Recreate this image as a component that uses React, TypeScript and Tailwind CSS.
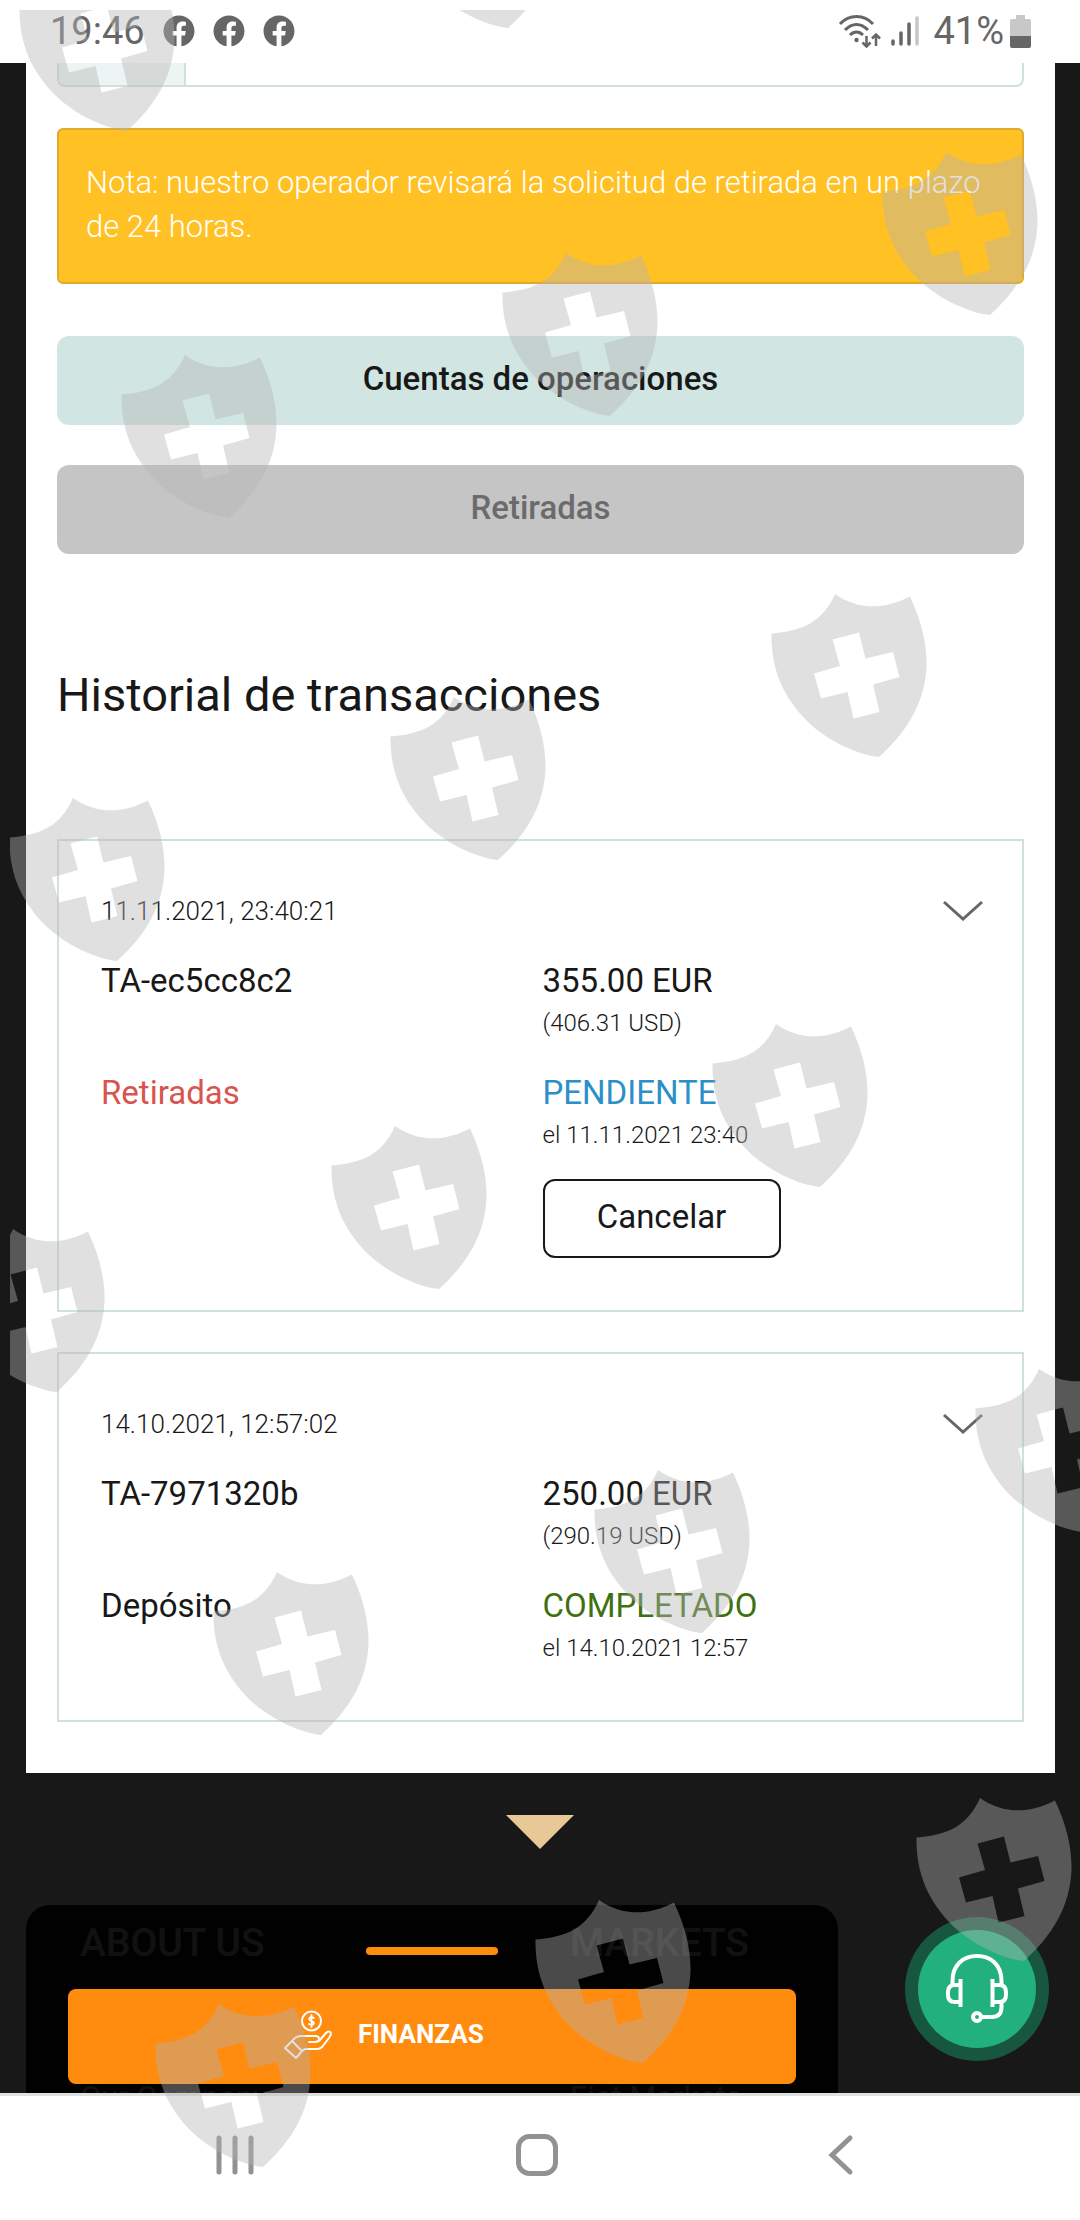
import { FaFacebook } from "react-icons/fa";

type Transaction = {
  id: string;
  date: string;
  type: string;
  typeColor: string;
  amount: string;
  converted: string;
  status: string;
  statusColor: string;
  statusDate: string;
  cancelable?: boolean;
};

const transactions: Transaction[] = [
  {
    id: "TA-ec5cc8c2",
    date: "11.11.2021, 23:40:21",
    type: "Retiradas",
    typeColor: "text-[#d9534f]",
    amount: "355.00 EUR",
    converted: "(406.31 USD)",
    status: "PENDIENTE",
    statusColor: "text-[#2b90c8]",
    statusDate: "el 11.11.2021 23:40",
    cancelable: true,
  },
  {
    id: "TA-7971320b",
    date: "14.10.2021, 12:57:02",
    type: "Depósito",
    typeColor: "text-[#181818]",
    amount: "250.00 EUR",
    converted: "(290.19 USD)",
    status: "COMPLETADO",
    statusColor: "text-[#3f7011]",
    statusDate: "el 14.10.2021 12:57",
  },
];

const shields = [
  [399, -139],
  [18, -36],
  [881, 148],
  [501, 249],
  [120, 351],
  [770, 590],
  [389, 693],
  [8, 794],
  [711, 1020],
  [330, 1122],
  [-52, 1225],
  [974, 1365],
  [593, 1466],
  [212, 1568],
  [915, 1794],
  [534, 1896],
  [154, 2000],
];

const Watermark = () => (
  <svg
    className="pointer-events-none absolute top-2.5 left-2.5 h-full w-full"
    aria-hidden="true"
  >
    <defs>
      <path
        id="shield"
        fillRule="evenodd"
        d="M1.5 43.5C32 41 52 33 65 4C88 20 114 20 140 6.500C152 32 157 55 156.500 76C155 112 138 141 109 167C88 165 58 151 38 132C12 106 1 78 1.500 43.500ZM62.500 49.500L70 76L44 83.500L51 108.500L77.500 102L83.500 128.500L109.500 122L103 94.500L129.500 87L123 62L95.500 68.500L89 42.500Z"
      />
    </defs>
    <g fill="#b4b4b4" fillOpacity="0.41">
      {shields.map(([x, y]) => (
        <use key={`${x}-${y}`} href="#shield" x={x - 10} y={y - 10} />
      ))}
    </g>
  </svg>
);

const StatusBar = () => (
  <header className="flex h-[63px] items-start justify-between bg-white pt-3 pr-[49px] pl-[50px] text-[#666]">
    <div className="flex items-center gap-[18px]">
      <span className="text-[38px] leading-[38px]">19:46</span>
      <div className="flex gap-[18px]">
        <FaFacebook size={32} />
        <FaFacebook size={32} />
        <FaFacebook size={32} />
      </div>
    </div>
    <div className="flex items-center">
      <svg className="mr-2.5" width="42" height="34" viewBox="0 0 42 34" fill="none" stroke="#666" strokeWidth="3">
        <path d="M1 10C10 0 25 0 34 10M6 16C13 8.500 22 8.500 29 16M11 21C15 17 20 17 24 21" />
        <circle cx="17.500" cy="26" r="2.200" fill="#666" stroke="none" />
        <path strokeWidth="2.500" d="M27.500 22V32M23.500 28.500L27.500 32.500L31.500 28.500M37 32V21M33 24.500L37 20.500L41 24.500" />
      </svg>
      <svg className="mr-3.5" width="28" height="32" viewBox="0 0 28 32" fill="none" strokeWidth="3.500" strokeLinecap="round">
        <path stroke="#666" d="M2 26V29M10 18V29M18 9V29" />
        <path stroke="#c6c6c6" d="M26 3V29" />
      </svg>
      <span className="text-[38px] leading-[38px]">41%</span>
      <svg className="ml-1.5" width="21" height="33" viewBox="0 0 21 33">
        <path fill="#c8c8c8" d="M6 0H15V4H19Q21 4 21 6V21H0V6Q0 4 2 4H6Z" />
        <path fill="#666" d="M0 21H21V31Q21 33 19 33H2Q0 33 0 31Z" />
      </svg>
    </div>
  </header>
);

const TransactionCard = ({ item }: { item: Transaction }) => (
  <article className="border-2 border-[#d0e0dd] pt-[50px] pr-[38px] pb-[52px] pl-[42px] text-[#181818]">
    <div className="flex h-10 items-center justify-between">
      <time className="text-[26px] leading-10 font-light">{item.date}</time>
      <button type="button" aria-label="Ver detalles">
        <svg width="42" height="22" viewBox="0 0 42 22" fill="none" stroke="#666" strokeWidth="3">
          <path d="M2 2L21 19L40 2" />
        </svg>
      </button>
    </div>
    <div className="mt-7 grid grid-cols-2 gap-y-7">
      <p className="text-[33px] leading-11">{item.id}</p>
      <div>
        <p className="text-[33px] leading-11">{item.amount}</p>
        <p className="text-[24px] leading-10 font-light">{item.converted}</p>
      </div>
      <p className={`text-[33px] leading-11 ${item.typeColor}`}>{item.type}</p>
      <div>
        <p className={`text-[33px] leading-11 ${item.statusColor}`}>{item.status}</p>
        <p className="text-[24px] leading-10 font-light">{item.statusDate}</p>
        {item.cancelable && (
          <button
            type="button"
            className="mt-6 block h-[79px] w-[238px] rounded-xl border-2 border-[#181818] pb-1 text-[33px] leading-11"
          >
            Cancelar
          </button>
        )}
      </div>
    </div>
  </article>
);

const FinanceIcon = () => (
  <svg width="48" height="50" viewBox="0 0 48 50" fill="none" stroke="#fff" strokeWidth="2" strokeLinejoin="round" strokeLinecap="round">
    <circle cx="27.500" cy="11" r="9.500" />
    <path strokeWidth="1.800" d="M30 8Q27.500 6.500 25.500 8Q24.500 10 27.500 11Q31 12 29.500 14Q27.500 15.500 25 14M27.500 5V17" />
    <path d="M8 31L1 38L12 48L18 41Z" />
    <path d="M8 31Q12 26 17 26H32Q36 27 35 30Q34 32 31 32H25M35 31L42 23Q45 20 47 23Q47 25 45 28L38 37Q36 39 33 39H22Q20 39 18 41" />
  </svg>
);

const BottomSheet = () => (
  <div className="absolute right-[242px] bottom-0 left-[26px] rounded-t-3xl bg-black/92 px-[42px] pt-[42px] pb-[9px]">
    <div className="mx-auto h-2 w-33 rounded bg-[#ff8b0f]" />
    <button
      type="button"
      className="mt-[34px] flex h-[95px] w-full items-center rounded-lg bg-[#ff8b0f] pb-1 pl-[216px] text-[26px] font-bold text-white"
    >
      <FinanceIcon />
      <span className="ml-[26px]">FINANZAS</span>
    </button>
  </div>
);

const SupportButton = () => (
  <button
    type="button"
    aria-label="Soporte"
    className="absolute right-[31px] bottom-8 flex size-36 items-center justify-center rounded-full bg-[#17573f]"
  >
    <span className="flex size-[118px] items-center justify-center rounded-full bg-[#22b07c]">
      <svg width="62" height="70" viewBox="0 0 62 70" fill="none" stroke="#fff" strokeWidth="4">
        <path d="M6.500 30V27C6.500 11 17 2 31 2C45 2 55.500 11 55.500 27V30" />
        <path d="M14.500 25V53M14.500 31H9Q2 31 2 38V41Q2 48 9 48H14.500M46.500 25V53M46.500 31H53Q60 31 60 38V41Q60 48 53 48H46.500" />
        <path d="M55.500 48V53Q55.500 63 46 63H35" />
        <circle cx="31" cy="63" r="4" />
      </svg>
    </span>
  </button>
);

const NavBar = () => (
  <nav className="flex h-[126px] items-start border-t-3 border-[#e0e0e0] bg-white pt-[38px] pr-[89px] pl-[84px]">
    <button type="button" aria-label="Recientes" className="flex flex-1 justify-center">
      <svg width="40" height="44" viewBox="0 0 40 44" stroke="#929292" strokeWidth="5" strokeLinecap="round">
        <path d="M4 4V38M20 4V38M36 4V38" />
      </svg>
    </button>
    <button type="button" aria-label="Inicio" className="flex flex-1 justify-center">
      <svg width="44" height="44" viewBox="0 0 44 44" fill="none" stroke="#929292" strokeWidth="5">
        <rect x="3.500" y="2.500" width="37" height="37" rx="11" />
      </svg>
    </button>
    <button type="button" aria-label="Atrás" className="flex flex-1 justify-center">
      <svg width="28" height="44" viewBox="0 0 28 44" fill="none" stroke="#929292" strokeWidth="5" strokeLinecap="round">
        <path d="M24 4L6 21L24 38" />
      </svg>
    </button>
  </nav>
);

const App = () => {
  return (
    <div className="relative overflow-hidden bg-[#181818] font-['Roboto','Liberation_Sans',sans-serif]">
      <StatusBar />

      <main className="mr-[25px] ml-[26px] bg-white px-[31px] pb-[51px]">
        <div className="flex h-6 overflow-hidden rounded-b-lg border-x-2 border-b-2 border-[#d0e0dd]">
          <div className="w-[127px] border-r-2 border-[#d0e0dd] bg-[#ecf5f3]" />
        </div>

        <p className="mt-[41px] rounded-md border-2 border-[#e0aa2c] bg-[#ffc124] px-[27px] pt-[31px] pb-[33px] text-[31px] leading-11 font-light text-white">
          Nota: nuestro operador revisará la solicitud de retirada en un plazo
          de 24 horas.
        </p>

        <div className="mt-[52px] flex flex-col gap-10 text-[33px] font-medium">
          <button type="button" className="h-[89px] rounded-xl bg-[#d1e6e3] pb-1 text-[#181818]">
            Cuentas de operaciones
          </button>
          <button type="button" disabled className="h-[89px] rounded-xl bg-[#c5c5c5] pb-1 text-[#6b6b6b]">
            Retiradas
          </button>
        </div>

        <h1 className="mt-[109px] text-[47px] leading-[64px] text-[#181818]">
          Historial de transacciones
        </h1>

        <section className="mt-28 flex flex-col gap-10">
          {transactions.map((item) => (
            <TransactionCard key={item.id} item={item} />
          ))}
        </section>
      </main>

      <footer className="relative h-80 overflow-hidden">
        <svg className="mx-auto mt-[42px]" width="68" height="34" viewBox="0 0 68 34">
          <path fill="#e8c896" d="M0 0H68L34 34Z" />
        </svg>
        <div className="mt-[68px] grid grid-cols-2 pr-5 pl-20 text-[#d8d8d8]">
          <div>
            <h2 className="text-[39px] leading-[52px] font-medium">ABOUT US</h2>
            <a href="#company" className="mt-[107px] block text-[31px] leading-11">
              Our Company
            </a>
          </div>
          <div>
            <h2 className="text-[39px] leading-[52px] font-medium">MARKETS</h2>
            <a href="#markets" className="mt-[107px] block text-[31px] leading-11">
              Fiat Markets
            </a>
          </div>
        </div>
        <BottomSheet />
        <SupportButton />
      </footer>

      <NavBar />
      <Watermark />
    </div>
  );
};

export default App;
